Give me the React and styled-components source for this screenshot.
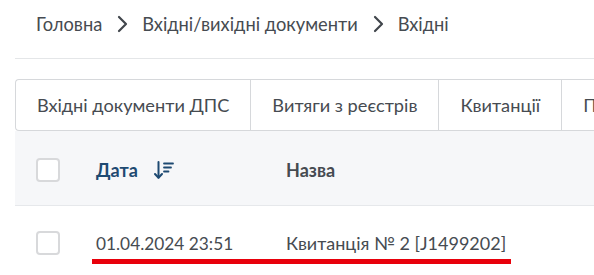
import styled, { createGlobalStyle } from "styled-components";

const GlobalStyle = createGlobalStyle`
  html, body {
    margin: 0;
    padding: 0;
    background: #ffffff;
    overflow: hidden;
  }
  body {
    font-family: Lato, "Noto Sans", sans-serif;
    color: #464b51;
  }
`;

const tabs = ["Вхідні документи ДПС", "Витяги з реєстрів", "Квитанції", "Податкові повідомлення"];

const Chevron = () => (
  <svg width="12" height="18" viewBox="0 0 12 18">
    <path d="M3 2 L10 9 L3 16" fill="none" stroke="#41464c" strokeWidth="2.2" strokeLinecap="round" strokeLinejoin="round" />
  </svg>
);

const SortIcon = () => (
  <svg width="22" height="20" viewBox="0 0 22 20">
    <path d="M4.5 2 V17.5" stroke="#1e4a72" strokeWidth="2" strokeLinecap="round" />
    <path d="M1 14 L4.5 17.8 L8 14" fill="none" stroke="#1e4a72" strokeWidth="2" strokeLinecap="round" strokeLinejoin="round" />
    <path d="M10 3.5 H19" stroke="#1e4a72" strokeWidth="1.8" strokeLinecap="round" />
    <path d="M10 7.5 H17" stroke="#1e4a72" strokeWidth="1.8" strokeLinecap="round" />
    <path d="M10 11.5 H14.5" stroke="#1e4a72" strokeWidth="1.8" strokeLinecap="round" />
  </svg>
);

const App = () => {
  return (
    <Page>
      <GlobalStyle />
      <Breadcrumbs>
        <Crumb>Головна</Crumb>
        <Chevron />
        <Crumb>Вхідні/вихідні документи</Crumb>
        <Chevron />
        <Crumb>Вхідні</Crumb>
      </Breadcrumbs>
      <Content>
        <TabBar>
          {tabs.map((t, i) => (
            <Tab key={i}>{t}</Tab>
          ))}
        </TabBar>
        <Table>
          <HeadRow>
            <CheckCell>
              <Checkbox />
            </CheckCell>
            <DateCell>
              <HeadLabel $accent>Дата</HeadLabel>
              <SortIcon />
            </DateCell>
            <NameCell>
              <HeadLabel>Назва</HeadLabel>
            </NameCell>
          </HeadRow>
          <BodyRow>
            <CheckCell>
              <Checkbox />
            </CheckCell>
            <DateCell>
              <CellText $size={17.3}>01.04.2024 23:51</CellText>
            </DateCell>
            <NameCell>
              <CellText>Квитанція № 2 [J1499202]</CellText>
            </NameCell>
            <RedMark />
          </BodyRow>
        </Table>
      </Content>
    </Page>
  );
};

const Page = styled.div`
  width: 594px;
  height: 275px;
  overflow: hidden;
`;

const Breadcrumbs = styled.div`
  display: flex;
  align-items: center;
  gap: 14px;
  height: 48px;
  padding-left: 36px;
  white-space: nowrap;
`;

const Crumb = styled.span`
  font-size: 18.3px;
  color: #464b51;
`;

const Content = styled.div`
  margin-left: 15px;
  margin-top: 10px;
  border-top: 1px solid #e4e6e8;
  padding-top: 20px;
  width: 760px;
`;

const TabBar = styled.div`
  display: flex;
  height: 50px;
  border: 1px solid #d6d8db;
  border-radius: 4px;
  border-right: none;
`;

const Tab = styled.div`
  display: flex;
  align-items: center;
  padding: 0 21px;
  font-size: 18.2px;
  color: #464b51;
  white-space: nowrap;
  border-left: 1px solid #d6d8db;

  &:first-child {
    border-left: none;
  }
`;

const Table = styled.div`
  display: flex;
  flex-direction: column;
`;

const HeadRow = styled.div`
  display: flex;
  align-items: center;
  height: 75px;
  box-sizing: border-box;
  padding-top: 3px;
  background: #f6f7f9;
  border-bottom: 1px solid #e6e8eb;
`;

const BodyRow = styled.div`
  position: relative;
  display: flex;
  align-items: center;
  height: 74px;
`;

const CheckCell = styled.div`
  width: 81px;
  padding-left: 21px;
  box-sizing: border-box;
  display: flex;
  align-items: center;
`;

const Checkbox = styled.div`
  width: 24px;
  height: 24px;
  box-sizing: border-box;
  border: 2px solid #d8d9db;
  border-radius: 4px;
  background: #ffffff;
`;

const DateCell = styled.div`
  width: 190px;
  display: flex;
  align-items: center;
  gap: 16px;
`;

const NameCell = styled.div`
  flex: 1;
  display: flex;
  align-items: center;
`;

const HeadLabel = styled.span`
  font-size: 18px;
  font-weight: 700;
  color: ${(p) => (p.$accent ? "#1e4a72" : "#464b51")};
`;

const CellText = styled.span`
  font-size: ${(p) => p.$size || 18}px;
  color: #464b51;
  white-space: nowrap;
`;

const RedMark = styled.div`
  position: absolute;
  left: 77px;
  top: 53px;
  width: 419px;
  height: 5px;
  background: #e8000b;
`;

export default App;
